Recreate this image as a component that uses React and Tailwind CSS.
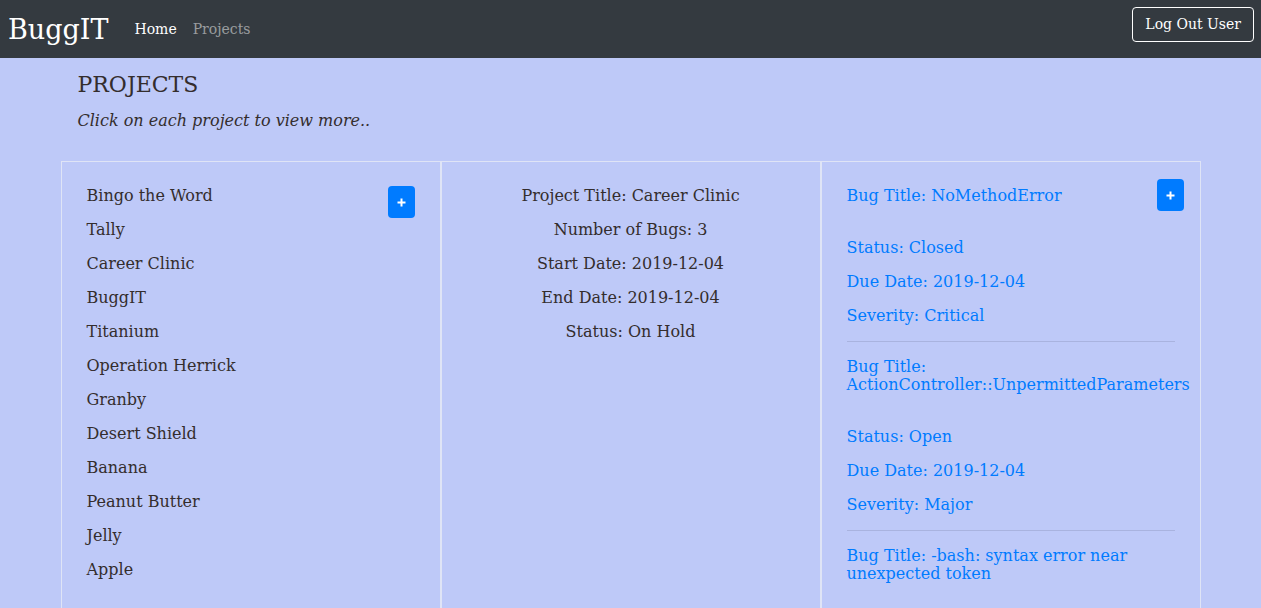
const projects = [
  "Bingo the Word",
  "Tally",
  "Career Clinic",
  "BuggIT",
  "Titanium",
  "Operation Herrick",
  "Granby",
  "Desert Shield",
  "Banana",
  "Peanut Butter",
  "Jelly",
  "Apple",
];

const details = [
  "Project Title: Career Clinic",
  "Number of Bugs: 3",
  "Start Date: 2019-12-04",
  "End Date: 2019-12-04",
  "Status: On Hold",
];

const bugs = [
  { title: "NoMethodError", status: "Closed", due: "2019-12-04", severity: "Critical" },
  { title: "ActionController::UnpermittedParameters", status: "Open", due: "2019-12-04", severity: "Major" },
  { title: "-bash: syntax error near unexpected token" },
];

function PlusButton({ className = "" }) {
  return (
    <button
      className={`w-[27px] h-[32px] shrink-0 rounded-[4px] bg-[#007bff] text-white flex items-center justify-center ${className}`}
    >
      <svg width="9" height="9" viewBox="0 0 9 9">
        <path d="M4.5 0.5v8M0.5 4.5h8" stroke="white" strokeWidth="2" />
      </svg>
    </button>
  );
}

export default function App() {
  return (
    <div
      className="min-h-[608px] bg-[#bec9f8] text-[#342d2d] text-[16px]"
      style={{ fontFamily: '"DejaVu Serif", serif' }}
    >
      <nav className="h-[58px] bg-[#343a40] flex justify-between pl-[8px] pr-[7px]">
        <div className="flex items-center">
          <span className="text-white text-[27px] leading-none mr-[26px]">BuggIT</span>
          <a className="text-white text-[14px] mr-[16px]">Home</a>
          <a className="text-white/50 text-[14px]">Projects</a>
        </div>
        <button className="mt-[7px] h-[35px] px-[12px] border border-white rounded-[4px] text-white text-[14px]">
          Log Out User
        </button>
      </nav>

      <div className="w-[1140px] mx-auto">
        <div className="px-[17px] pt-[13px]">
          <h1 className="text-[22px] leading-[28px]">PROJECTS</h1>
          <p className="italic text-[16px] leading-[22px] mt-[11px]">Click on each project to view more..</p>
        </div>

        <div className="grid grid-cols-3 mt-[29px]">
          <div className="border border-[#dfe4f6] px-[25px] pt-[25px] pb-[25px] flex justify-between">
            <div>
              {projects.map((p) => (
                <p key={p} className="leading-[18px] mb-[16px]">{p}</p>
              ))}
            </div>
            <PlusButton className="-mt-[1px]" />
          </div>

          <div className="border border-[#dfe4f6] px-[25px] pt-[25px] text-center">
            {details.map((d) => (
              <p key={d} className="leading-[18px] mb-[16px]">{d}</p>
            ))}
          </div>

          <div className="border border-[#dfe4f6] pl-[25px] pr-[25px] pt-[25px] text-[#007bff]">
            {bugs.map((b, i) => (
              <div key={i}>
                <div className="flex justify-between items-start">
                  <p className="leading-[18px] mb-[34px]">Bug Title: {b.title}</p>
                  {i === 0 && <PlusButton className="-mt-[8px] -mr-[9px]" />}
                </div>
                {b.status && (
                  <>
                    <p className="leading-[18px] mb-[16px]">Status: {b.status}</p>
                    <p className="leading-[18px] mb-[16px]">Due Date: {b.due}</p>
                    <p className="leading-[18px] mb-[16px]">Severity: {b.severity}</p>
                    <hr className="border-0 border-t border-[#a9b3df] mb-[16px]" />
                  </>
                )}
              </div>
            ))}
          </div>
        </div>
      </div>
    </div>
  );
}
